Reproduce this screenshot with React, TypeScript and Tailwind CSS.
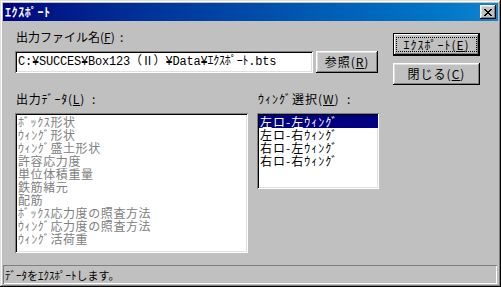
import React from 'react';

const raised = 'shadow-[inset_-1px_-1px_#000,inset_1px_1px_#fff,inset_-2px_-2px_#808080,inset_2px_2px_#dfdfdf]';
const sunken = 'shadow-[inset_1px_1px_#808080,inset_-1px_-1px_#fff,inset_2px_2px_#000,inset_-2px_-2px_#dfdfdf]';

const Btn = ({ children, w, h, def = false }: { children: React.ReactNode; w: string; h: string; def?: boolean }) => (
  <div
    className={`${w} ${h} flex items-center justify-center bg-[#c0c0c0] text-black tracking-[1px] ${
      def ? 'border border-black shadow-[inset_-1px_-1px_#000,inset_1px_1px_#fff,inset_-2px_-2px_#808080]' : raised
    }`}
  >
    {def ? (
      <div className="w-[81px] h-[15px] border border-dotted border-black flex items-center justify-center leading-[12px]">
        {children}
      </div>
    ) : (
      <span className="leading-[12px]">{children}</span>
    )}
  </div>
);

const outputItems = [
  'ﾎﾞｯｸｽ形状',
  'ｳｨﾝｸﾞ形状',
  'ｳｨﾝｸﾞ盛土形状',
  '許容応力度',
  '単位体積重量',
  '鉄筋緒元',
  '配筋',
  'ﾎﾞｯｸｽ応力度の照査方法',
  'ｳｨﾝｸﾞ応力度の照査方法',
  'ｳｨﾝｸﾞ活荷重',
];

const wingItems = ['左ロ-左ｳｨﾝｸﾞ', '左ロ-右ｳｨﾝｸﾞ', '右ロ-左ｳｨﾝｸﾞ', '右ロ-右ｳｨﾝｸﾞ'];

export default function App() {
  return (
    <div
      className={`w-[501px] h-[287px] bg-[#c0c0c0] p-[3px] flex flex-col text-[12px] text-black font-["Noto_Sans_CJK_JP",sans-serif] shadow-[inset_-1px_-1px_#000,inset_1px_1px_#dfdfdf,inset_-2px_-2px_#808080,inset_2px_2px_#fff]`}
    >
      {/* Title bar */}
      <div className="h-[18px] flex items-center justify-between bg-gradient-to-r from-[#000080] to-[#1084d0] pl-[2px] pr-[2px]">
        <span className="text-white font-bold leading-[12px] tracking-[0.6px]">ｴｸｽﾎﾟｰﾄ</span>
        <div className={`w-[16px] h-[14px] bg-[#c0c0c0] flex items-center justify-center ${raised}`}>
          <svg width="8" height="7" viewBox="0 0 8 7" shapeRendering="crispEdges">
            <path
              d="M0 0h2v1H0zM6 0h2v1H6zM1 1h2v1H1zM5 1h2v1H5zM2 2h4v1H2zM3 3h2v1H3zM2 4h4v1H2zM1 5h2v1H1zM5 5h2v1H5zM0 6h2v1H0zM6 6h2v1H6z"
              fill="#000"
            />
          </svg>
        </div>
      </div>

      {/* Body */}
      <div className="h-[244px] flex pl-[12px] pt-[10px]">
        <div className="w-[364px] flex flex-col">
          <div className="h-[12px] leading-[12px] ml-[1px] whitespace-pre">
            出力ファイル名(<u>F</u>)  :
          </div>
          <div className="flex mt-[8px]">
            <div className={`w-[298px] h-[22px] bg-white flex items-center pl-[3px] ${sunken}`}>
              <span className="font-['Liberation_Mono','Noto_Sans_CJK_JP',monospace] leading-[12px] whitespace-nowrap tracking-[-0.2px]">
                C:¥SUCCES¥Box123（Ⅱ）¥Data¥ｴｸｽﾎﾟｰﾄ.bts
              </span>
            </div>
            <div className="ml-[3px]">
              <Btn w="w-[62px]" h="h-[22px]">
                参照(<u>R</u>)
              </Btn>
            </div>
          </div>
          <div className="flex mt-[20px]">
            <div className="w-[233px] flex flex-col">
              <div className="h-[12px] leading-[12px] ml-[1px] whitespace-pre tracking-[0.8px]">
                出力ﾃﾞｰﾀ(<u>L</u>)  :
              </div>
              <div className={`mt-[8px] h-[140px] bg-white p-[2px] ${sunken}`}>
                {outputItems.map((t) => (
                  <div key={t} className="h-[13px] leading-[13px] pl-[1px] text-[#808080] whitespace-nowrap tracking-[0.6px]">
                    {t}
                  </div>
                ))}
              </div>
            </div>
            <div className="w-[122px] ml-[9px] flex flex-col">
              <div className="h-[12px] leading-[12px] ml-[1px] whitespace-pre tracking-[1px]">
                ｳｨﾝｸﾞ選択(<u>W</u>)  :
              </div>
              <div className={`mt-[8px] h-[76px] bg-white p-[2px] pr-[1px] ${sunken}`}>
                {wingItems.map((t, i) => (
                  <div
                    key={t}
                    className={`h-[13px] leading-[13px] pl-[1px] whitespace-nowrap tracking-[1px] ${
                      i === 0 ? 'bg-[#000080] text-white' : 'text-black'
                    }`}
                  >
                    {t}
                  </div>
                ))}
              </div>
            </div>
          </div>
        </div>

        <div className="ml-[14px] mt-[2px] flex flex-col gap-[7px]">
          <Btn w="w-[87px]" h="h-[23px]" def>
            ｴｸｽﾎﾟｰﾄ(<u>E</u>)
          </Btn>
          <Btn w="w-[87px]" h="h-[22px]">
            閉じる(<u>C</u>)
          </Btn>
        </div>
      </div>

      {/* Status bar */}
      <div className="h-[19px] mr-[1px] flex items-center pl-[2px] shadow-[inset_1px_1px_#808080,inset_-1px_-1px_#fff]">
        <span className="text-[11px] leading-[12px]">ﾃﾞｰﾀをｴｸｽﾎﾟｰﾄします。</span>
      </div>
    </div>
  );
}
